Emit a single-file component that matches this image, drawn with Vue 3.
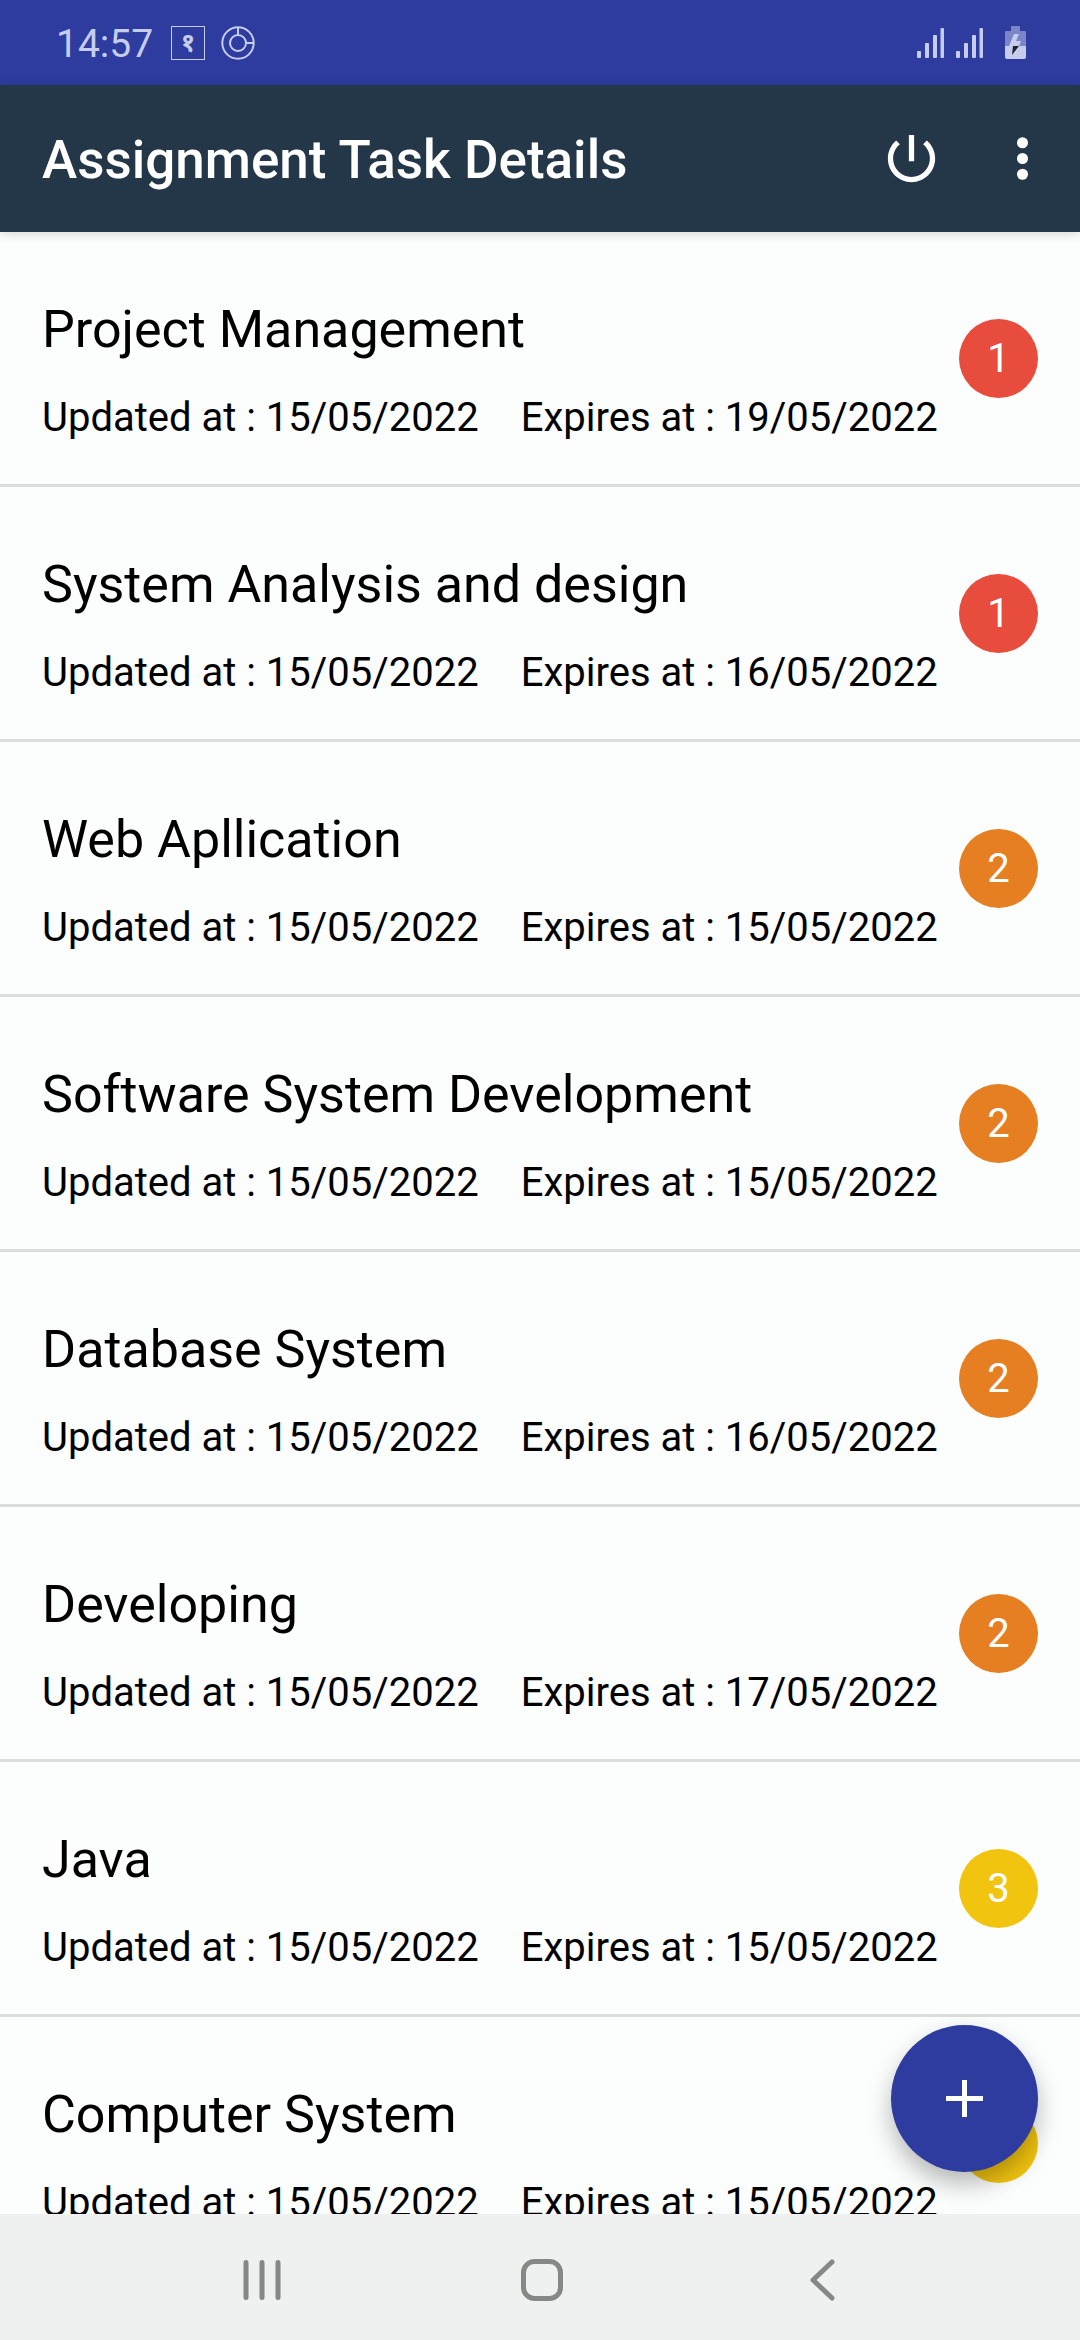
<script setup>
const tasks = [
  { title: 'Project Management', updated: '15/05/2022', expires: '19/05/2022', priority: 1 },
  { title: 'System Analysis and design', updated: '15/05/2022', expires: '16/05/2022', priority: 1 },
  { title: 'Web Apllication', updated: '15/05/2022', expires: '15/05/2022', priority: 2 },
  { title: 'Software System Development', updated: '15/05/2022', expires: '15/05/2022', priority: 2 },
  { title: 'Database System', updated: '15/05/2022', expires: '16/05/2022', priority: 2 },
  { title: 'Developing', updated: '15/05/2022', expires: '17/05/2022', priority: 2 },
  { title: 'Java', updated: '15/05/2022', expires: '15/05/2022', priority: 3 },
  { title: 'Computer System', updated: '15/05/2022', expires: '15/05/2022', priority: 3 },
]
</script>

<template>
  <div class="screen">
    <div class="status-bar">
      <span class="clock">14:57</span>
      <span class="calendar-icon">१</span>
      <svg class="ring-icon" width="34" height="34" viewBox="0 0 34 34" aria-hidden="true">
        <g fill="none" stroke="currentColor" stroke-width="2">
          <circle cx="17" cy="17" r="15.7" />
          <circle cx="17" cy="17" r="8" />
          <path d="M17 1v8M25 17h8" />
        </g>
      </svg>
      <div class="status-right">
        <svg v-for="n in 2" :key="n" width="27" height="30" viewBox="0 0 27 30" aria-hidden="true">
          <g fill="currentColor">
            <rect x="0" y="23" width="4" height="7" rx="1" />
            <rect x="8" y="15" width="4" height="15" rx="1" />
            <rect x="16" y="7" width="4" height="23" rx="1" />
            <rect x="23.500" y="0" width="3.500" height="30" rx="1" />
          </g>
        </svg>
        <svg class="battery" width="21" height="33" viewBox="0 0 21 33" aria-hidden="true">
          <path fill="#7b85c8" d="M6 1q0-1 1-1h7q1 0 1 1v4h5q1 0 1 1v14H0V6q0-1 1-1h5z" />
          <path fill="currentColor" d="M0 20h21v11q0 2-2 2H2q-2 0-2-2z" />
          <path fill="currentColor" d="M9 8h5l-3 7h5l-2 5H4z" />
          <path fill="#1c2233" d="M8 20h6L7 29z" />
        </svg>
      </div>
    </div>

    <header class="app-bar">
      <h1>Assignment Task Details</h1>
      <button type="button" aria-label="Log out">
        <svg viewBox="0 0 24 24" aria-hidden="true">
          <path fill="currentColor" d="M13 3h-2v10h2V3zm4.83 2.17l-1.42 1.42C17.99 7.86 19 9.81 19 12c0 3.87-3.13 7-7 7s-7-3.13-7-7c0-2.19 1.01-4.14 2.58-5.42L6.17 5.17C4.23 6.82 3 9.26 3 12c0 4.97 4.03 9 9 9s9-4.03 9-9c0-2.74-1.23-5.18-3.17-6.83z" />
        </svg>
      </button>
      <button type="button" aria-label="More options">
        <svg viewBox="0 0 24 24" aria-hidden="true">
          <g fill="currentColor">
            <circle cx="12" cy="6" r="2.1" />
            <circle cx="12" cy="12" r="2.1" />
            <circle cx="12" cy="18" r="2.1" />
          </g>
        </svg>
      </button>
    </header>

    <main class="content">
      <ul class="tasks">
        <li v-for="task in tasks" :key="task.title" class="task">
          <div class="task-text">
            <h2>{{ task.title }}</h2>
            <p>
              <span>Updated at : {{ task.updated }}</span>
              <span>Expires at : {{ task.expires }}</span>
            </p>
          </div>
          <span class="priority" :class="'priority-' + task.priority">{{ task.priority }}</span>
        </li>
      </ul>
      <button type="button" class="fab" aria-label="Add task">
        <svg viewBox="0 0 37 37" aria-hidden="true">
          <path fill="currentColor" d="M16 0h5v16h16v5H21v16h-5V21H0v-5h16z" />
        </svg>
      </button>
    </main>

    <nav class="nav-bar">
      <button type="button" aria-label="Recent apps">
        <svg width="44" height="44" viewBox="0 0 44 44" aria-hidden="true">
          <path d="M6 4.500v35M22 4.500v35M38 4.500v35" />
        </svg>
      </button>
      <button type="button" aria-label="Home">
        <svg width="44" height="44" viewBox="0 0 44 44" aria-hidden="true">
          <rect x="3.500" y="3.500" width="37" height="37" rx="11" />
        </svg>
      </button>
      <button type="button" aria-label="Back">
        <svg width="44" height="44" viewBox="0 0 44 44" aria-hidden="true">
          <path d="M32 4L13 22l19 18" />
        </svg>
      </button>
    </nav>
  </div>
</template>

<style>
body {
  margin: 0;
}
</style>

<style scoped>
.screen {
  display: flex;
  flex-direction: column;
  height: 100vh;
  overflow: hidden;
  background: #fcfdfd;
  color: #000;
  font-family: Roboto, "Noto Sans", sans-serif;
}

button {
  display: flex;
  align-items: center;
  justify-content: center;
  margin: 0;
  padding: 0;
  border: 0;
  background: none;
  color: inherit;
}

.status-bar {
  display: flex;
  flex: none;
  align-items: center;
  height: 85px;
  padding: 0 54px 0 56px;
  background: #2e3b9f;
  color: #c6cdec;
}

.clock {
  padding-top: 3px;
  font-size: 39px;
  line-height: 46px;
}

.calendar-icon {
  box-sizing: border-box;
  width: 34px;
  height: 34px;
  margin-left: 18px;
  border: 1px solid currentColor;
  font-family: "Noto Sans", sans-serif;
  font-size: 26px;
  font-weight: 700;
  line-height: 28px;
  text-align: center;
}

.ring-icon {
  margin-left: 16px;
}

.status-right {
  display: flex;
  gap: 12px;
  align-items: center;
  margin-left: auto;
}

.battery {
  margin-left: 10px;
}

.app-bar {
  z-index: 1;
  display: flex;
  flex: none;
  gap: 48px;
  align-items: center;
  height: 147px;
  padding: 0 26px 0 42px;
  background: #243748;
  color: #fff;
  box-shadow: 0 2px 10px rgba(0, 0, 0, 0.16);
}

.app-bar h1 {
  flex: 1;
  margin: 0;
  padding-top: 3px;
  font-size: 53px;
  font-weight: 500;
  line-height: 62px;
}

.app-bar svg {
  width: 63px;
  height: 63px;
}

.content {
  position: relative;
  flex: 1;
  min-height: 0;
  overflow: hidden;
}

.tasks {
  margin: 0;
  padding: 0;
  list-style: none;
}

.task {
  display: flex;
  align-items: center;
  justify-content: space-between;
  padding: 0 42px;
  border-bottom: 3px solid #dcdddd;
}

.task-text {
  padding: 67px 0 43px;
}

.task h2 {
  margin: 0;
  font-size: 52px;
  font-weight: 400;
  line-height: 62px;
}

.task p {
  display: flex;
  gap: 42px;
  margin: 34px 0 0;
  font-size: 40px;
  line-height: 46px;
  white-space: nowrap;
}

.priority {
  width: 79px;
  height: 79px;
  border-radius: 50%;
  color: #fff;
  font-size: 40px;
  line-height: 80px;
  text-align: center;
}

.priority-1 {
  background: #e74c3c;
}

.priority-2 {
  background: #e67e22;
}

.priority-3 {
  background: #f1c40f;
}

.fab {
  position: absolute;
  right: 42px;
  bottom: 42px;
  width: 147px;
  height: 147px;
  border-radius: 50%;
  background: #2e3b9f;
  color: #fff;
  box-shadow: 0 12px 24px rgba(0, 0, 0, 0.28);
}

.fab svg {
  width: 37px;
  height: 37px;
}

.nav-bar {
  display: flex;
  flex: none;
  justify-content: center;
  height: 126px;
  padding-left: 4px;
  background: #eff1f1;
  color: #858885;
}

.nav-bar button {
  width: 26%;
  padding-top: 6px;
}

.nav-bar svg {
  fill: none;
  stroke: currentColor;
  stroke-width: 5;
  stroke-linecap: round;
  stroke-linejoin: round;
}
</style>
